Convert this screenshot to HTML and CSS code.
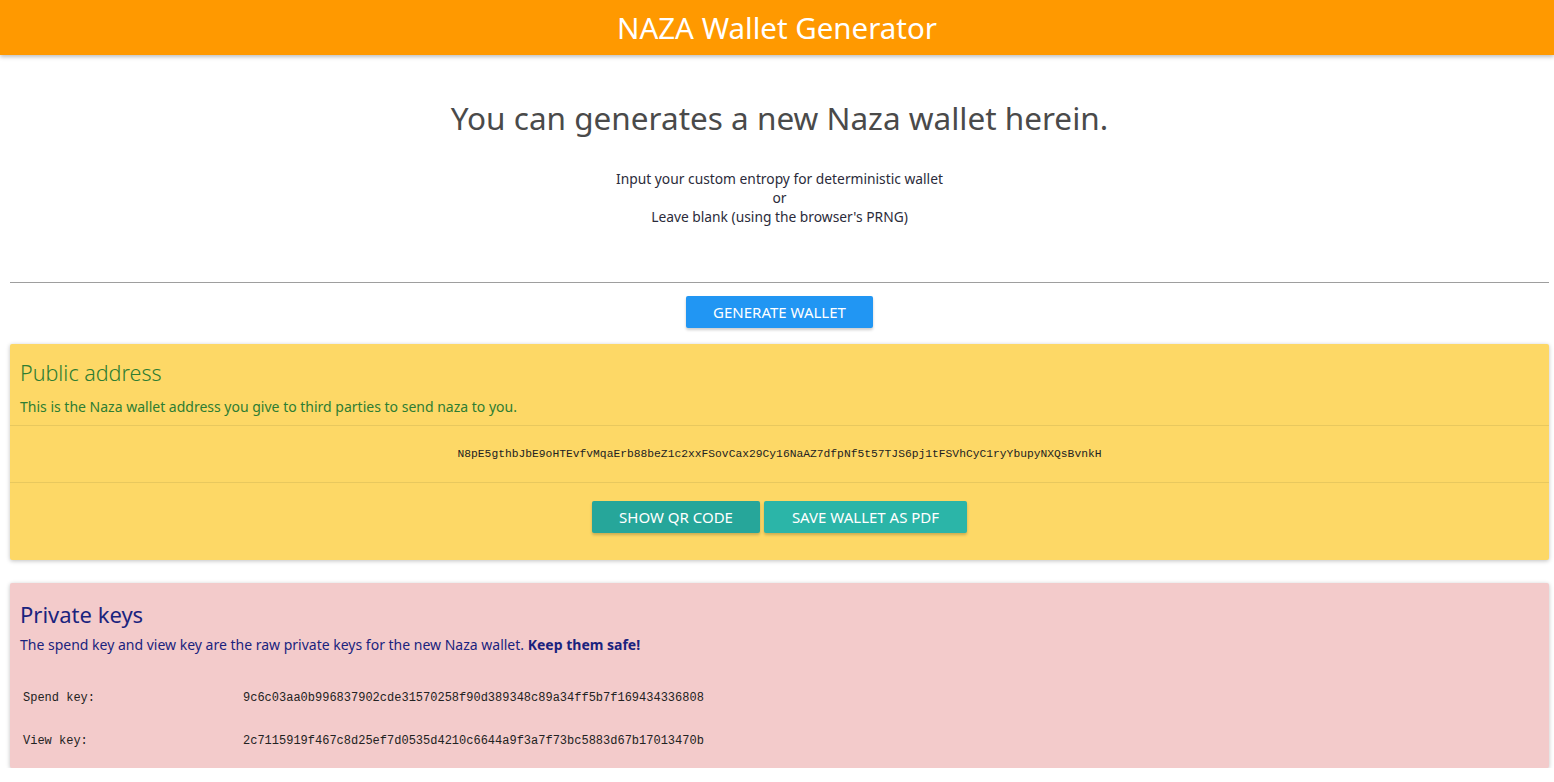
FILE: index.html
```html
<!DOCTYPE html>
<html>
<head>
<meta charset="utf-8">
<link rel="stylesheet" href="styles.css">
</head>
<body>
<header class="topbar">NAZA Wallet Generator</header>
<main class="page">
  <section class="intro">
    <h1 class="intro-title">You can generates a new Naza wallet herein.</h1>
    <p class="intro-text">Input your custom entropy for deterministic wallet<br>or<br>Leave blank (using the browser's PRNG)</p>
  </section>
  <hr class="rule">
  <div class="gen-row"><button class="btn btn-blue">GENERATE WALLET</button></div>

  <section class="card card-yellow">
    <div class="card-head">
      <h2 class="card-title">Public address</h2>
      <p class="card-desc">This is the Naza wallet address you give to third parties to send naza to you.</p>
    </div>
    <div class="card-addr">N8pE5gthbJbE9oHTEvfvMqaErb88beZ1c2xxFSovCax29Cy16NaAZ7dfpNf5t57TJS6pj1tFSVhCyC1ryYbupyNXQsBvnkH</div>
    <div class="card-actions">
      <button class="btn btn-teal-dark">SHOW QR CODE</button>
      <button class="btn btn-teal">SAVE WALLET AS PDF</button>
    </div>
  </section>

  <section class="card card-pink">
    <div class="card-head pink-head">
      <h2 class="card-title">Private keys</h2>
      <p class="card-desc">The spend key and view key are the raw private keys for the new Naza wallet. <strong>Keep them safe!</strong></p>
    </div>
    <div class="keys">
      <div class="key-row"><span class="key-label">Spend key:</span><span class="key-val">9c6c03aa0b996837902cde31570258f90d389348c89a34ff5b7f169434336808</span></div>
      <div class="key-row"><span class="key-label">View key:</span><span class="key-val">2c7115919f467c8d25ef7d0535d4210c6644a9f3a7f73bc5883d67b17013470b</span></div>
    </div>
  </section>
</main>
</body>
</html>
```

FILE: styles.css
```css
* { box-sizing: border-box; }
html, body { margin: 0; padding: 0; }
body {
  font-family: "Noto Sans", "Open Sans", sans-serif;
  background: #fff;
  color: #333;
}
.topbar {
  height: 55px;
  background: #ff9900;
  color: #fff;
  font-size: 29.5px;
  line-height: 55px;
  text-align: center;
  box-shadow: 0 2px 4px rgba(0,0,0,0.25);
}
.page { padding: 0 5px 0 10px; }
.intro { text-align: center; }
.intro-title {
  margin: 0;
  padding-top: 38px;
  font-size: 31.5px;
  font-weight: 400;
  line-height: 50px;
  color: #4a4a4a;
}
.intro-text {
  margin: 26px 0 0;
  font-size: 13.8px;
  line-height: 19px;
  color: #2b2b3a;
}
.rule {
  margin: 56px 0 0;
  border: 0;
  border-top: 1px solid #9e9e9e;
  height: 0;
}
.gen-row {
  display: flex;
  justify-content: center;
  padding-top: 13px;
  padding-bottom: 16px;
}
.btn {
  border: 0;
  border-radius: 2px;
  color: #fff;
  font-family: inherit;
  font-size: 15px;
  height: 32px;
  padding: 0;
  box-shadow: 0 2px 3px rgba(0,0,0,0.2);
  cursor: pointer;
}
.btn-blue { background: #2196f3; width: 187px; }
.btn-teal-dark { background: #26a69a; width: 168px; }
.btn-teal { background: #2bb5a8; width: 203px; }
.card {
  border-radius: 2px;
  box-shadow: 0 1px 4px rgba(0,0,0,0.25);
}
.card-yellow { background: #fdd866; height: 216px; }
.card-pink { background: #f3cbcb; margin-top: 23px; height: 185px; }
.card-head { padding: 14px 10px 0; height: 81px; }
.card-title {
  margin: 0;
  font-size: 21.5px;
  font-weight: 300;
  line-height: 30px;
}
.card-desc {
  margin: 9px 0 0;
  font-size: 14px;
  line-height: 19px;
}
.card-yellow .card-title, .card-yellow .card-desc { color: #2e7d32; }
.card-addr {
  border-top: 1px solid #e8c85e;
  border-bottom: 1px solid #e8c85e;
  height: 58px;
  display: flex;
  align-items: center;
  justify-content: center;
  font-family: "Liberation Mono", monospace;
  font-size: 11.3px;
  color: #222;
}
.card-actions {
  display: flex;
  justify-content: center;
  gap: 4px;
  padding-top: 18px;
}
.pink-head { padding-top: 16px; height: auto; }
.card-pink .card-title { color: #1a237e; font-weight: 400; font-size: 22px; }
.card-pink .card-desc { color: #1a237e; margin-top: 6px; }
.card-pink strong { font-weight: 700; }
.keys { padding: 22px 13px 0; }
.key-row {
  display: flex;
  height: 43px;
  align-items: center;
  font-family: "Liberation Mono", monospace;
  font-size: 12px;
  color: #222;
}
.key-label { width: 220px; }
```
